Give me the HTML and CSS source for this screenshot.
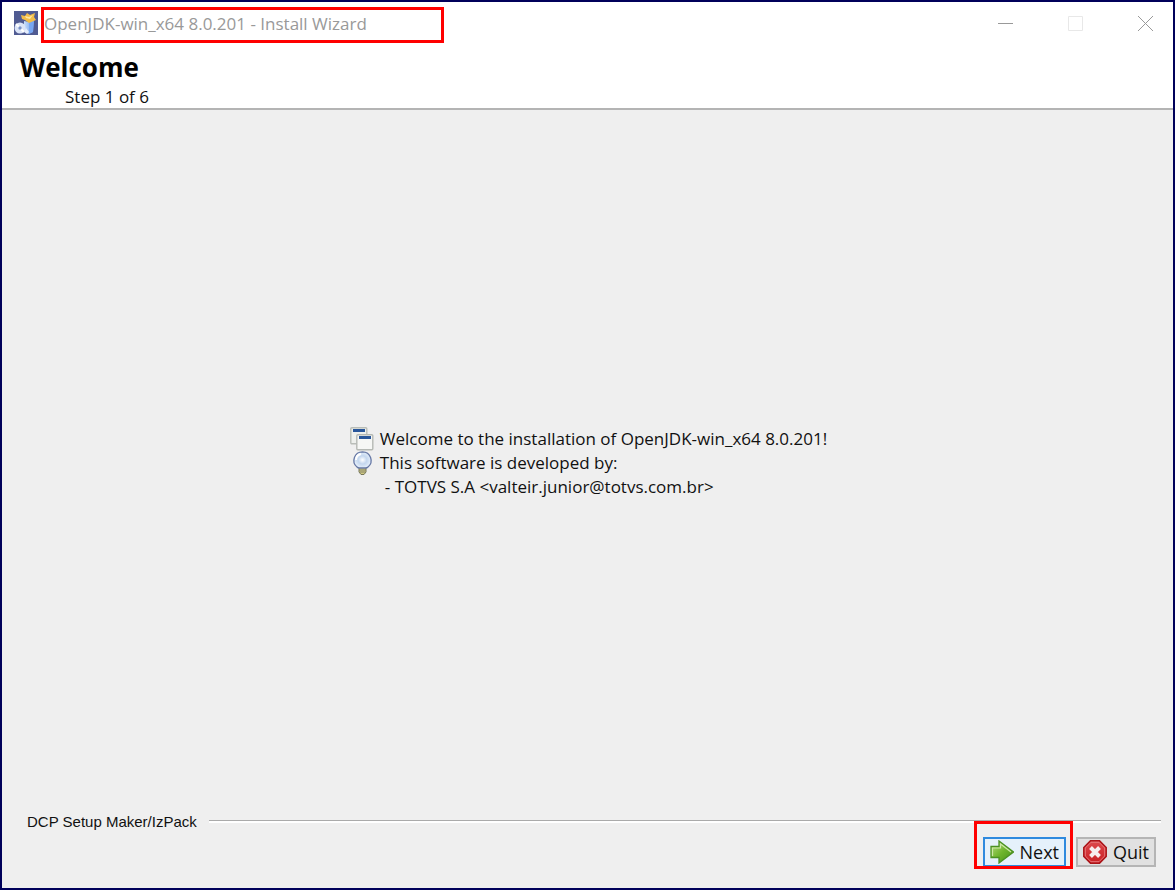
FILE: index.html
```html
<!DOCTYPE html>
<html lang="en">
<head>
<meta charset="utf-8">
<title>OpenJDK-win_x64 8.0.201 - Install Wizard</title>
<link rel="stylesheet" href="styles.css">
</head>
<body>
<div class="window">
  <header class="titlebar">
    <svg class="app-icon" viewBox="0 0 24 24" aria-hidden="true">
      <defs><linearGradient id="box" x2="1"><stop stop-color="#c9defa"/><stop offset="1" stop-color="#6c9cec"/></linearGradient></defs>
      <rect width="24" height="24" fill="#505b92"/>
      <path d="M10 10l5 1 5-2-1 12-5 2-4-3z" fill="url(#box)"/>
      <path d="M15 11l5-2-1 12-4 2z" fill="#78a7f2"/>
      <path d="M7 4l4 1 2-3 3 2 5-2-1 4 2 3-7 3-4-3-3-1z" fill="#f3bd49"/>
      <path d="M11 5l4 1 4-2-3 4-4-1z" fill="#ffe7a0"/>
      <circle cx="6" cy="17" r="5.5" fill="#dce5f8"/>
      <path d="M6 17L2 13M6 17l4 4" stroke="#fff" stroke-width="2"/>
      <circle cx="6" cy="17" r="1.7" fill="#7891c9"/>
      <path d="M10 21l2-4 3 4-2 2z" fill="#e5edfc"/>
    </svg>
    <div class="title-mark"><span class="title">OpenJDK-win_x64 8.0.201 - Install Wizard</span></div>
    <div class="controls">
      <button class="control" type="button" aria-label="Minimize"><svg viewBox="0 0 15 15"><path d="M0 7.5h15" stroke="#999"/></svg></button>
      <button class="control" type="button" aria-label="Maximize" disabled><svg viewBox="0 0 15 15"><path d="M.5.5h14v14H.5z" fill="none" stroke="#e8e8e8"/></svg></button>
      <button class="control" type="button" aria-label="Close"><svg viewBox="0 0 15 15"><path d="M0 0l15 15M15 0L0 15" stroke="#999"/></svg></button>
    </div>
  </header>
  <div class="heading">
    <h1>Welcome</h1>
    <p>Step 1 of 6</p>
  </div>
  <main class="content">
    <div class="messages">
      <div class="message">
        <svg class="message-icon" viewBox="0 0 24 24" aria-hidden="true">
          <rect x=".8" y=".8" width="16" height="16" rx="1" fill="#eef0ed" stroke="#b9bdb8" stroke-width="1.4"/>
          <path d="M3 3.500h12" stroke="#28569a" stroke-width="3"/>
          <rect x="6.8" y="7.8" width="16" height="15" rx="1" fill="#f6f7f5" stroke="#b5b9b4" stroke-width="1.4"/>
          <path d="M9 10.500h12" stroke="#28569a" stroke-width="3"/>
        </svg>
        <span>Welcome to the installation of OpenJDK-win_x64 8.0.201!</span>
      </div>
      <div class="message">
        <svg class="message-icon" viewBox="0 0 24 24" aria-hidden="true">
          <defs><radialGradient id="glass"><stop stop-color="#fff"/><stop offset=".5" stop-color="#c4d7ef"/><stop offset="1" stop-color="#e5effa"/></radialGradient></defs>
          <path d="M9 16h7v5l-2 2.500h-3L9 21z" fill="#d0c982" stroke="#77775b"/>
          <path d="M9 19h7M10 21h5" stroke="#85836a"/>
          <path d="M12.500.800a8.600 8.600 0 0 1 5.500 15.200q-1 1-2.500 1H9.500Q8 17 7 16A8.600 8.600 0 0 1 12.500.800z" fill="url(#glass)" stroke="#6678a5" stroke-width="1.300"/>
          <path d="M6 9q0-5 5-6" fill="none" stroke="#fff" stroke-width="2"/>
        </svg>
        <span>This software is developed by:</span>
      </div>
      <div class="message author">- TOTVS S.A &lt;valteir.junior@totvs.com.br&gt;</div>
    </div>
  </main>
  <footer class="footer">
    <div class="brand"><span>DCP Setup Maker/IzPack</span></div>
    <div class="actions">
      <div class="next-mark">
        <button class="button next" type="button">
          <svg viewBox="0 0 24 24" aria-hidden="true">
            <defs><linearGradient id="green" x2="1" y2="1"><stop stop-color="#b9dc83"/><stop offset=".5" stop-color="#6fb52d"/><stop offset="1" stop-color="#438e17"/></linearGradient></defs>
            <path d="M1 6.500h8V1l14.500 11L9 23v-5.500H1z" fill="url(#green)" stroke="#4a9023" stroke-width="1.300"/>
            <path d="M2.500 16V8h8V4l10.500 8" fill="none" stroke="#cce7a6" stroke-width="1.200"/>
          </svg>
          <span>Next</span>
        </button>
      </div>
      <button class="button quit" type="button">
        <svg viewBox="0 0 24 24" aria-hidden="true">
          <defs><linearGradient id="red" y2="1" x2="0"><stop stop-color="#dd4a4d"/><stop offset="1" stop-color="#c91e22"/></linearGradient></defs>
          <path d="M7.500.800h9l6.700 6.700v9l-6.700 6.700h-9L.800 16.500v-9z" fill="url(#red)" stroke="#a91418" stroke-width="1.500"/>
          <path d="M8 2.300h8L21.700 8v8L16 21.700H8L2.300 16V8z" fill="none" stroke="#e7777a"/>
          <path d="M7.500 7.500l9 9M16.500 7.500l-9 9" stroke="#f7eded" stroke-width="4"/>
        </svg>
        <span>Quit</span>
      </button>
    </div>
  </footer>
</div>
</body>
</html>
```
FILE: styles.css
```css
* { box-sizing: border-box; }
body {
  margin: 0;
  font-family: "Open Sans", "Noto Sans", sans-serif;
  font-size: 17px;
  color: #111;
}
.window {
  min-height: 100vh;
  display: flex;
  flex-direction: column;
  border: 2px solid #00005a;
  background: #efefef;
}
.titlebar {
  display: flex;
  align-items: flex-start;
  padding: 5px 12px 0;
  background: #fff;
}
.app-icon { width: 24px; height: 24px; margin: 4px 3px 0 0; flex: none; }
.title-mark {
  width: 403px;
  height: 36px;
  border: 3px solid #f00;
}
.title { display: block; font-size: 17px; line-height: 28px; color: #999; white-space: nowrap; }
.controls { display: flex; gap: 32px; margin: 9px -1px 0 auto; }
.control {
  display: flex;
  justify-content: center;
  padding: 0;
  width: 38px;
  border: 0;
  background: none;
}
.control:last-child { margin-right: -2px; }
.control svg { width: 15px; height: 15px; }
.heading {
  padding: 6px 18px 0;
  background: #fff;
  border-bottom: 2px solid #b4b4b4;
}
h1 { margin: 0; font-size: 26px; line-height: 36px; font-weight: 700; color: #000; }
.heading p { margin: 0; padding-left: 45px; font-size: 17px; line-height: 23px; }
.content {
  flex: 1;
  display: flex;
  align-items: center;
  justify-content: center;
}
.messages { padding-left: 2px; font-size: 17px; line-height: 24px; }
.message { display: flex; gap: 6px; white-space: nowrap; }
.message-icon { width: 24px; height: 24px; flex: none; }
.author { padding-left: 35px; }
.footer { padding: 0 12px 21px 25px; }
.brand {
  display: flex;
  gap: 12px;
  font-family: "Liberation Sans", Arial, sans-serif;
  font-size: 15px;
  line-height: 14px;
}
.brand::after {
  content: "";
  flex: 1;
  height: 2px;
  margin-top: 5px;
  border-top: 1px solid #aaa;
  background: #fff;
}
.actions {
  display: flex;
  justify-content: flex-end;
  gap: 10px;
  padding: 8px 5px 0 0;
}
.next-mark { position: relative; }
.next-mark::after {
  content: "";
  position: absolute;
  inset: -16px -7px -2px -9px;
  border: 3px solid #f00;
  pointer-events: none;
}
.button {
  display: flex;
  align-items: center;
  gap: 6px;
  height: 30px;
  padding: 0 6px;
  border: 2px solid #b5b5b5;
  background: #e1e1e1;
  font: inherit;
  font-size: 18px;
  line-height: 24px;
  color: #111;
}
.button svg { width: 24px; height: 24px; flex: none; }
.next { padding: 0 5px; border-color: #2f8ade; background: #e5f1fb; }
.quit { padding: 0 5px; }
```
